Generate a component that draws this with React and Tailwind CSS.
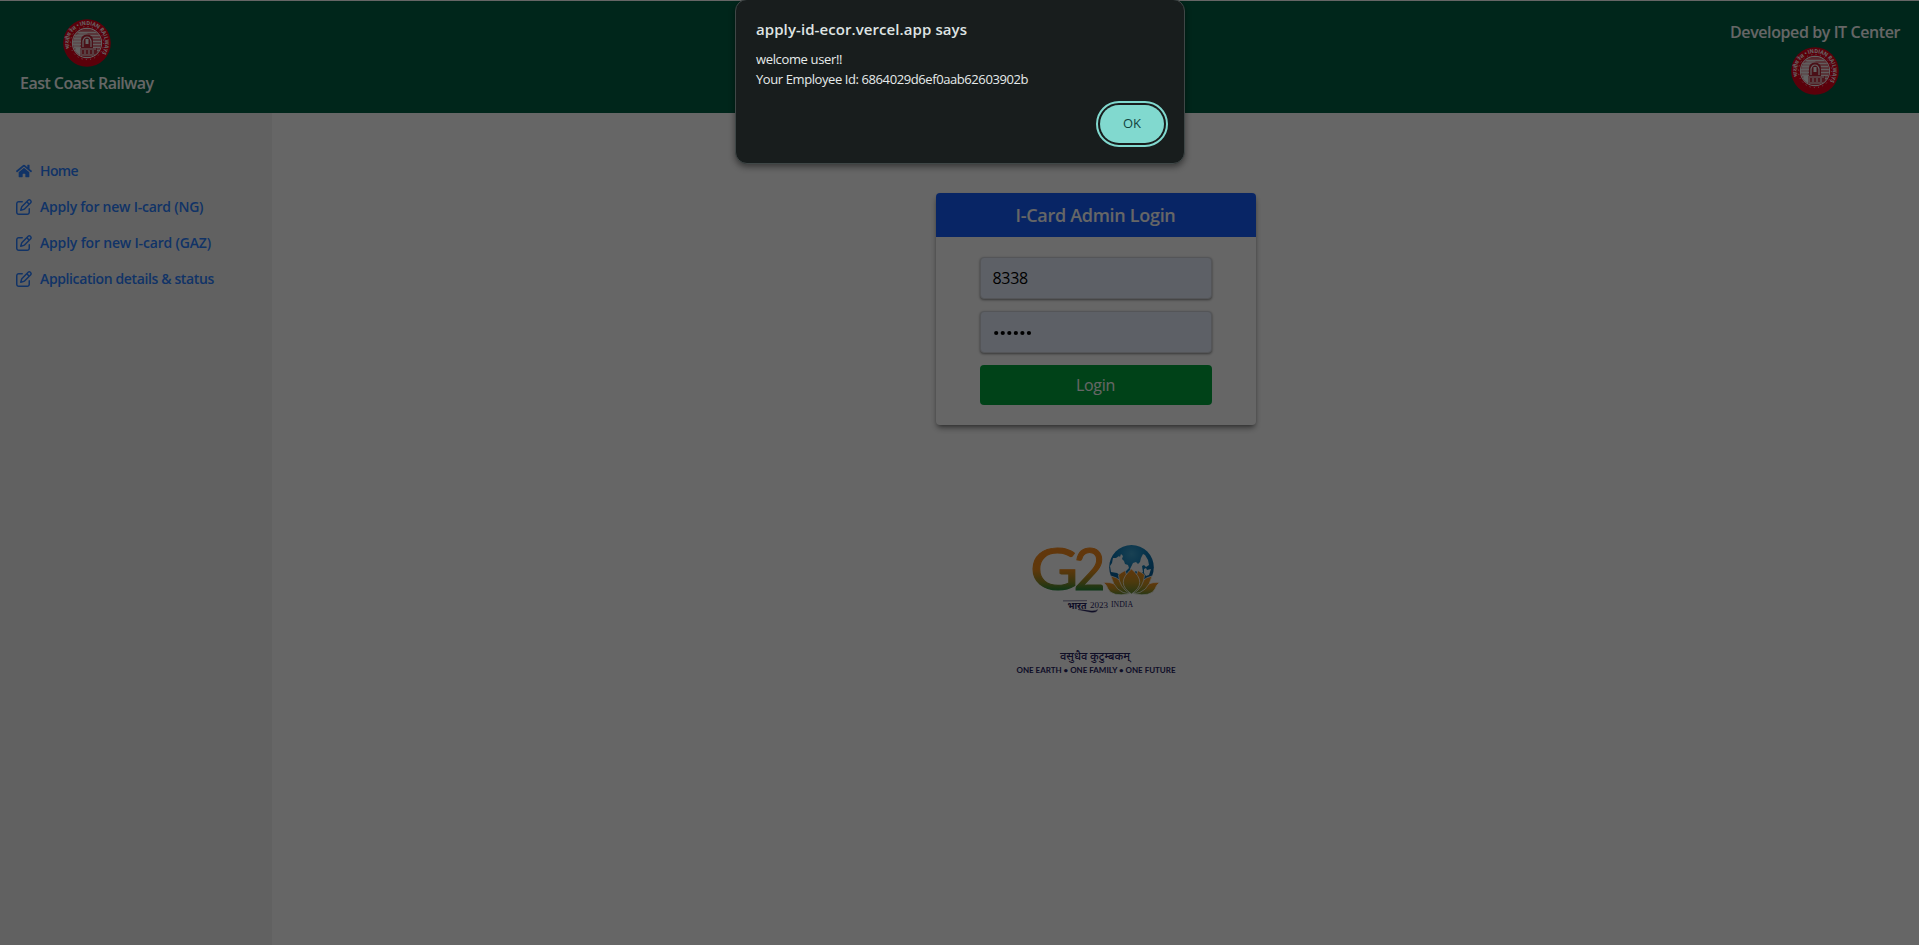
import { FaHome } from "react-icons/fa";
import { FaRegPenToSquare } from "react-icons/fa6";

function RailwayEmblem({ id }) {
  return (
    <svg viewBox="0 0 48 48" className="size-12 shrink-0 overflow-visible" aria-hidden="true">
      <defs>
        <path id={id} d="M 6.9 29.6 A 18 18 0 1 1 36.6 36.8" />
        <clipPath id={id + "-disc"}>
          <circle cx="24" cy="24" r="14" />
        </clipPath>
      </defs>
      <circle cx="24" cy="24" r="23.8" fill="#e4001b" />
      <circle cx="24" cy="24" r="16.6" fill="none" stroke="#f6d5d8" strokeWidth="1" strokeDasharray="1 3.35" />
      <circle cx="24" cy="24" r="14.6" fill="none" stroke="#f4f4f4" strokeWidth="1.1" />
      <g clipPath={`url(#${id}-disc)`}>
        <rect x="9" y="9" width="30" height="30" fill="#d8646f" />
        <path d="M9 13.5h30M9 16.5h30M9 19.5h30M9 22.5h30M9 25.5h30M9 28.5h30M9 31.5h30" stroke="#f4e8e9" strokeWidth="1.5" />
        <path d="M10 19Q17 11 24 14L27 18L18 21L15 38H10Z" fill="#eee" opacity=".6" />
        <path d="M18 29V21Q18 16 24 15.5Q30 16 30 21V29Z" fill="#b8283a" />
        <path d="M20 28V22Q21 18 24 18Q27 18 28 22V28" fill="none" stroke="#f4f4f4" strokeWidth="1.2" />
        <rect x="22.5" y="20" width="3" height="5" fill="#f4f4f4" />
        <path d="M15 29H34V39H15Z" fill="#c23a4a" />
        <path d="M16 30H33M18 31V35M22 31V35M26 31V35M30 31V35M12 36H36" stroke="#f4f4f4" strokeWidth="1.1" />
        <path d="M11 38L13 29H17V38Z" fill="#f4f4f4" />
      </g>
      <text fill="#fff" fontSize="5.6" fontWeight="700" fontFamily="'Open Sans', 'Noto Sans', sans-serif">
        <textPath href={"#" + id} textLength="73" lengthAdjust="spacingAndGlyphs">
          भारतीय रेल • INDIAN RAILWAYS
        </textPath>
      </text>
    </svg>
  );
}

function G20Logo() {
  return (
    <svg viewBox="0 0 172 140" className="h-[140px] w-[172px]">
      <defs>
        <linearGradient id="tricolor" gradientUnits="userSpaceOnUse" x1="0" y1="7" x2="0" y2="52">
          <stop offset="0" stopColor="#f58a1f" />
          <stop offset=".5" stopColor="#ee8c1c" />
          <stop offset=".78" stopColor="#8d8a28" />
          <stop offset="1" stopColor="#13883e" />
        </linearGradient>
        <linearGradient id="petal" x1="0" y1="0" x2="0" y2="1">
          <stop offset="0" stopColor="#f58a1f" />
          <stop offset=".5" stopColor="#c49222" />
          <stop offset="1" stopColor="#5c8a34" />
        </linearGradient>
        <radialGradient id="ocean" cx=".5" cy=".2" r=".7">
          <stop offset="0" stopColor="#3fa3d0" />
          <stop offset=".5" stopColor="#0f7cb8" />
          <stop offset="1" stopColor="#075a96" />
        </radialGradient>
      </defs>
      <g fill="url(#tricolor)" stroke="url(#tricolor)" strokeWidth="1.1" fontFamily="Lato, sans-serif">
        <text x="20" y="50.2" fontSize="58" textLength="48.500" lengthAdjust="spacingAndGlyphs">G</text>
        <text x="63.500" y="50.2" fontSize="58.500" textLength="32" lengthAdjust="spacingAndGlyphs">2</text>
      </g>
      <g transform="translate(10 0)">
        <circle cx="111.5" cy="27.300" r="22.3" fill="url(#ocean)" />
        <g fill="#f4f8fa">
          <path d="M96 18l3-2 1 1 1-3 2 2-1 3 2 2 1 3 3 1 1 3-3 3-3 1-2 4-4-3-6-1-1-6 2-3 1-5z" />
          <path d="M113 23l3-1 2 2 2-2 1-4 2-4 2 1 3 5 1 5-3 2-2-2-2 1 1 6-4 2-3-3-3 2-3-4z" />
          <path d="M124 29l2-1 1 2 4-1-2 6-3 1-2-3z" />
        </g>
        <g fill="url(#petal)" stroke="#fff" strokeWidth=".7" strokeLinejoin="round">
          <path d="M83.500 42.500Q96 41 109 54Q92 57 88 49Q87 45 83.500 42.500Z" />
          <path d="M139.500 42.500Q127 41 114 54Q131 57 135 49Q136 45 139.500 42.500Z" />
          <path d="M91 36Q102 38 110 54Q95 53 91 36Z" />
          <path d="M132 36Q121 38 113 54Q128 53 132 36Z" />
          <path d="M100 33.500L105 30.500Q109 40 110 54Q99 47 98.500 35Z" />
          <path d="M123 33.500L118 30.500Q114 40 113 54Q124 47 124.500 35Z" />
          <path d="M111.500 29Q128 43 111.500 54Q95 43 111.500 29Z" />
        </g>
      </g>
      <g fill="#27235f">
        <text x="57.500" y="68.500" fontSize="9.500" fontWeight="700" fontFamily="'Open Sans', 'Noto Sans', sans-serif" textLength="19" lengthAdjust="spacingAndGlyphs">भारत</text>
        <path d="M53 60.900L77 60.700" stroke="#27235f" strokeWidth=".6" />
        <path d="M68 69.500Q76 71 80 72Q87 73 87.500 69.500Q87 71.200 81 70.900Q75 70 68 69.500Z" stroke="#27235f" strokeWidth=".4" />
        <text x="80" y="67.500" fontSize="8.800" fontFamily="'Liberation Serif', serif" textLength="18" lengthAdjust="spacingAndGlyphs">2023</text>
        <text x="101" y="67" fontSize="8" fontFamily="'Liberation Serif', serif" textLength="22" lengthAdjust="spacingAndGlyphs">INDIA</text>
        <text x="50" y="119.500" fontSize="11.500" fontWeight="500" fontFamily="'Open Sans', 'Noto Sans', sans-serif" textLength="70" lengthAdjust="spacingAndGlyphs">वसुधैव कुटुम्बकम्</text>
        <text x="6.500" y="133.200" fontSize="6.800" fontWeight="700" fontFamily="Lato, sans-serif" textLength="159" lengthAdjust="spacingAndGlyphs">ONE EARTH • ONE FAMILY • ONE FUTURE</text>
      </g>
    </svg>
  );
}

const links = [
  { icon: FaHome, label: "Home", tracking: "tracking-[-0.6px]" },
  { icon: FaRegPenToSquare, label: "Apply for new I-card (NG)", tracking: "tracking-[-0.24px]" },
  { icon: FaRegPenToSquare, label: "Apply for new I-card (GAZ)", tracking: "tracking-[-0.18px]" },
  { icon: FaRegPenToSquare, label: "Application details & status", tracking: "tracking-[-0.38px]" },
];

function Header() {
  return (
    <header className="flex h-28 shrink-0 items-center justify-between bg-[#006045] px-5 font-semibold text-white">
      <div className="flex flex-col items-center gap-1 text-white">
        <RailwayEmblem id="ring-left" />
        <p className="leading-6 tracking-[-0.54px]">East Coast Railway</p>
      </div>
      <div className="-mr-px flex flex-col items-center gap-[3px]">
        <p className="leading-6 tracking-[-0.41px]">Developed by IT Center</p>
        <RailwayEmblem id="ring-right" />
      </div>
    </header>
  );
}

function Sidebar() {
  return (
    <aside className="w-[272px] shrink-0 bg-[#f3f3f3] px-4 pt-12">
      <nav className="flex flex-col gap-4">
        {links.map(({ icon: Icon, label, tracking }) => (
          <a key={label} href="#" className="flex h-5 items-center gap-2 text-sm font-semibold text-[#2b7fff]">
            <Icon className="size-4 shrink-0" />
            <span className={tracking}>{label}</span>
          </a>
        ))}
      </nav>
    </aside>
  );
}

function LoginCard() {
  const field =
    "flex h-[42px] items-center rounded border border-[#d1d5dc] bg-[#e8f0fe] px-3 text-black shadow-[0_1px_3px_rgba(0,0,0,0.3),0_1px_2px_rgba(0,0,0,0.2)]";
  return (
    <section className="w-80 rounded bg-white shadow-[0_4px_6px_-1px_rgba(0,0,0,0.4),0_2px_4px_-2px_rgba(0,0,0,0.4)]">
      <h1 className="rounded-t bg-[#155dfc] py-2 text-center text-lg leading-7 font-semibold tracking-[-0.3px] text-white">
        I-Card Admin Login
      </h1>
      <form className="flex flex-col gap-3 px-11 py-5">
        <div className={field}>
          <span className="tracking-[-0.3px]">8338</span>
        </div>
        <div className={field}>
          <svg viewBox="0 0 40 6" className="mt-0.5 ml-px h-1.5 w-10" fill="#000">
            {[2.2, 8.75, 15.3, 21.85, 28.4, 34.95].map((x) => (
              <circle key={x} cx={x} cy="3" r="2.1" />
            ))}
          </svg>
        </div>
        <button type="button" className="h-10 rounded bg-[#00a63e] tracking-[-0.3px] text-white">
          Login
        </button>
      </form>
    </section>
  );
}

function AlertDialog() {
  return (
    <div
      role="alertdialog"
      className="absolute -top-px left-[735px] flex h-[165px] w-[450px] flex-col rounded-xl border border-[#3f4747] bg-[#181d1d] px-5 shadow-[0_3px_6px_rgba(0,0,0,0.45)]"
    >
      <h2 className="mt-[17px] text-[15px] leading-6 font-semibold tracking-[0.08px] text-[#dfe4e3]">
        apply-id-ecor.vercel.app says
      </h2>
      <div className="mt-2 text-[13px] leading-5 text-[#e6ebea]">
        <p className="tracking-[-0.36px]">welcome user!!</p>
        <p className="tracking-[-0.41px]">Your Employee Id: 6864029d6ef0aab62603902b</p>
      </div>
      <button
        type="button"
        className="mt-4 h-[38px] w-16 self-end rounded-full bg-[#81d9cf] text-[13px] font-medium text-[#11433e] outline-2 outline-offset-2 outline-[#81d9cf]"
      >
        OK
      </button>
    </div>
  );
}

export default function App() {
  return (
    <div className="relative flex h-[945px] flex-col overflow-hidden bg-white pt-px font-['Open_Sans','Noto_Sans',sans-serif] text-base">
      <Header />
      <div className="flex min-h-0 flex-1">
        <Sidebar />
        <main className="flex flex-1 flex-col items-center gap-[115px] pt-20">
          <LoginCard />
          <G20Logo />
        </main>
      </div>
      <div className="absolute inset-0 bg-black/60" />
      <AlertDialog />
    </div>
  );
}
